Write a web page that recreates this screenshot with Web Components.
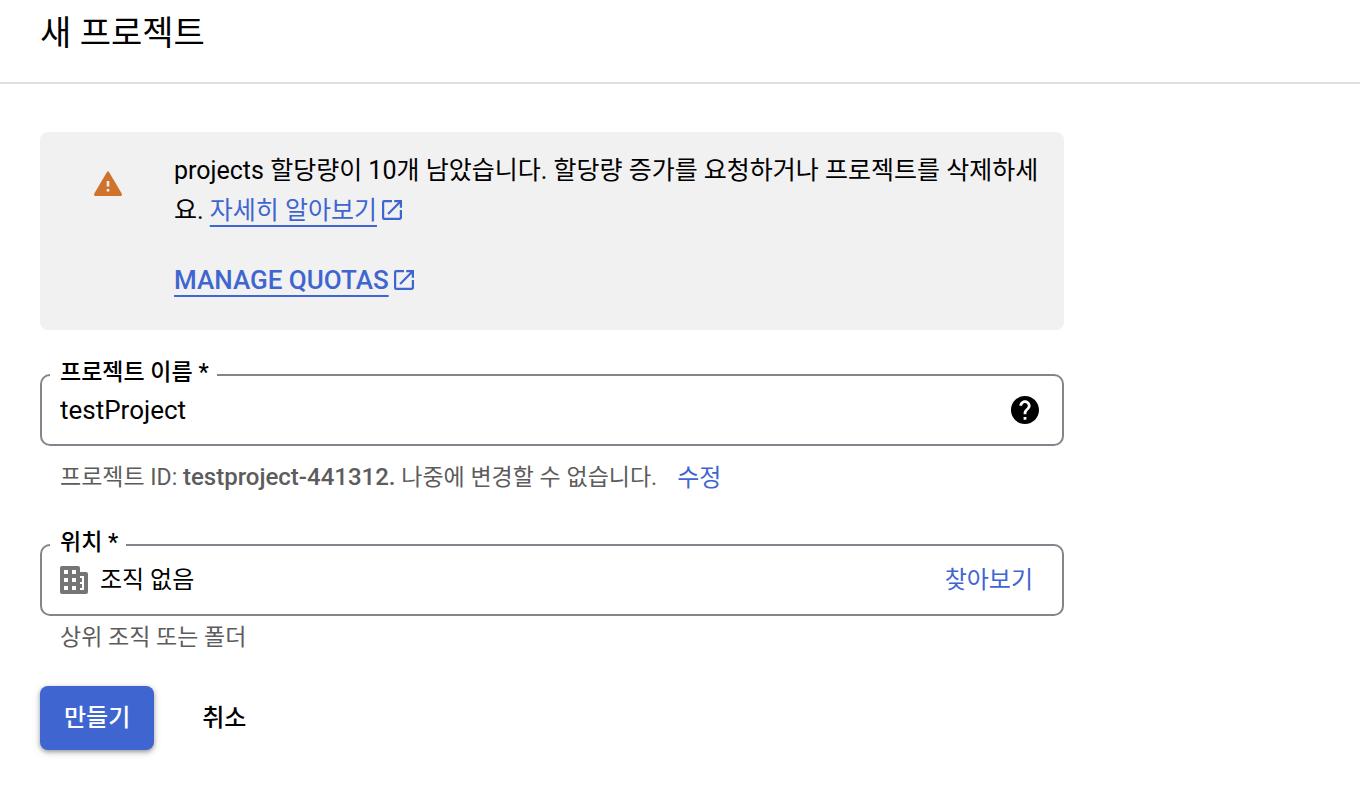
<!DOCTYPE html>
<html lang="ko">
<head>
<meta charset="utf-8">
<title>새 프로젝트</title>
<style>
  body {
    margin: 0;
    background: #fff;
    color: #000;
    font-family: Roboto, "Noto Sans CJK KR", sans-serif;
    --blue: #3f66d0;
    --outline: #80868b;
    --muted: #5c5c5c;
  }
</style>
</head>
<body>
<new-project-page></new-project-page>

<script>
const define = (name, html, setup) => customElements.define(name, class extends HTMLElement {
  constructor() {
    super();
    const template = document.createElement('template');
    template.innerHTML = html;
    this.attachShadow({ mode: 'open' }).append(template.content.cloneNode(true));
  }
  connectedCallback() { if (setup) setup(this, this.shadowRoot); }
});

const icons = {
  warning: ['0 0 28 25', 28, 25, '<path fill-rule="evenodd" d="M13 1Q14-.7 15 1L27.7 22.6Q28.6 25 26.4 25H1.6Q-.6 25 .3 22.6ZM12.7 10v5.6h2.6V10zm0 8v2.6h2.6V18z"/>'],
  external: ['3 3 18 18', 20, 20, '<path d="M19 19H5V5h7V3H5a2 2 0 0 0-2 2v14a2 2 0 0 0 2 2h14c1.100 0 2-.9 2-2v-7h-2zM14 3v2h3.590l-9.830 9.830 1.410 1.410L19 6.410V10h2V3z"/>'],
  help: ['2 2 20 20', 28, 28, '<path d="M12 2C6.480 2 2 6.480 2 12s4.480 10 10 10 10-4.480 10-10S17.520 2 12 2zm1 17h-2v-2h2zm2.070-7.750-.9.920C13.450 12.900 13 13.500 13 15h-2v-.5c0-1.100.450-2.100 1.170-2.830l1.240-1.260c.370-.360.590-.860.590-1.410 0-1.100-.9-2-2-2s-2 .9-2 2H8c0-2.210 1.790-4 4-4s4 1.790 4 4c0 .880-.360 1.680-.930 2.250z"/>'],
  building: ['0 0 28 28', 28, 28, '<path fill-rule="evenodd" d="M2 0H18Q20 0 20 2V6H26Q28 6 28 8V26Q28 28 26 28H2Q0 28 0 26V2Q0 0 2 0ZM4 4V8H8V4ZM12 4V8H16V4ZM4 12V16H8V12ZM12 12V16H16V12ZM4 20V24H8V20ZM12 20V24H16V20ZM20 10V12H22V16H20V18H22V22H20V24H24V10Z"/>']
};

define('line-icon', `
  <style>:host { display: inline-flex; flex: none; } svg { display: block; fill: currentColor; }</style>
  <svg aria-hidden="true"></svg>`, (host, root) => {
  const [box, width, height, shape] = icons[host.getAttribute('name')];
  const svg = root.querySelector('svg');
  svg.setAttribute('viewBox', box);
  svg.setAttribute('width', width);
  svg.setAttribute('height', height);
  svg.innerHTML = shape;
});

define('page-header', `
  <style>
    :host { display: block; padding: 8px 40px 24px; border-bottom: 2px solid #dfdfdf; }
    h1 { margin: 0; font-size: 34px; line-height: 50px; font-weight: 400; }
  </style>
  <header><h1><slot></slot></h1></header>`);

define('external-link', `
  <style>
    :host { display: inline; color: var(--blue); }
    a { color: inherit; text-decoration: underline 2px; text-underline-offset: 6px; text-decoration-skip-ink: none; }
    line-icon { margin-left: 5px; vertical-align: -1px; }
  </style>
  <a href="#"><slot></slot></a><line-icon name="external"></line-icon>`);

define('quota-notice', `
  <style>
    :host { display: flex; align-items: flex-start; gap: 52px; padding: 19px 24px 30px 54px; border-radius: 8px; background: #f1f1f1; }
    line-icon { color: #cf722b; margin-top: 20px; }
    .body { flex: 1; font-size: 25px; line-height: 40px; }
    .action { margin-top: 29px; font-size: 26px; font-weight: 500; }
  </style>
  <line-icon name="warning"></line-icon>
  <div class="body"><slot></slot><div class="action"><slot name="action"></slot></div></div>`);

define('outlined-field', `
  <style>
    :host { display: block; }
    .box { position: relative; display: flex; align-items: center; gap: 12px; height: 68px; padding: 0 23px 0 18px; border: 2px solid var(--outline); border-radius: 10px; }
    label { position: absolute; top: -19px; left: 8px; padding: 0 8px 0 10px; background: #fff; font-size: 23px; line-height: 32px; font-weight: 500; }
    input { flex: 1; min-width: 0; padding: 0; border: 0; outline: 0; background: none; color: inherit; font: inherit; font-size: 26px; line-height: 40px; }
    input[readonly] { font-size: 24px; }
    .hint { padding: 6px 20px 0; font-size: 23px; line-height: 32px; color: var(--muted); }
  </style>
  <div class="box">
    <label for="field"></label>
    <slot name="leading"></slot>
    <input id="field" type="text">
    <slot name="trailing"></slot>
  </div>
  <div class="hint"><slot name="hint"></slot></div>`, (host, root) => {
  const input = root.querySelector('input');
  root.querySelector('label').textContent = host.getAttribute('label');
  input.value = host.getAttribute('value');
  input.readOnly = host.hasAttribute('readonly');
});

define('action-button', `
  <style>
    :host { display: inline-flex; }
    button { margin: 0; padding: 0; border: 0; background: none; color: inherit; font: inherit; font-size: 24px; line-height: 32px; font-weight: 500; cursor: pointer; }
    :host([kind="link"]) button { color: var(--blue); font-weight: 400; }
    :host([kind="primary"]) button, :host([kind="plain"]) button { height: 64px; padding: 0 24px; border-radius: 8px; }
    :host([kind="primary"]) button { background: var(--blue); color: #fff; box-shadow: 0 2px 4px rgba(0,0,0,.3), 0 2px 8px rgba(0,0,0,.15); }
  </style>
  <button type="button"><slot></slot></button>`);

define('new-project-page', `
  <style>
    :host { display: block; }
    main { max-width: 1024px; padding: 48px 40px; }
    .name { margin-top: 44px; }
    .place { margin-top: 50px; }
    .hint-row { display: flex; align-items: center; gap: 20px; padding-top: 9px; }
    .hint-row strong { font-weight: 500; font-size: 24px; }
    .leading { color: #757575; }
    .browse { padding: 0 6px; }
    .actions { display: flex; gap: 24px; margin-top: 32px; }
    .help { display: flex; padding: 0; border: 0; background: none; color: #000; }
  </style>
  <page-header>새 프로젝트</page-header>
  <main>
    <quota-notice>projects 할당량이 10개 남았습니다. 할당량 증가를 요청하거나 프로젝트를 삭제하세요. <external-link>자세히 알아보기</external-link><external-link slot="action">MANAGE QUOTAS</external-link></quota-notice>
    <outlined-field class="name" label="프로젝트 이름 *" value="testProject">
      <button class="help" slot="trailing" type="button" aria-label="도움말"><line-icon name="help"></line-icon></button>
      <div class="hint-row" slot="hint"><span>프로젝트 ID: <strong>testproject-441312.</strong> 나중에 변경할 수 없습니다.</span><action-button kind="link">수정</action-button></div>
    </outlined-field>
    <outlined-field class="place" label="위치 *" value="조직 없음" readonly>
      <line-icon class="leading" slot="leading" name="building"></line-icon>
      <action-button class="browse" slot="trailing" kind="link">찾아보기</action-button>
      <span slot="hint">상위 조직 또는 폴더</span>
    </outlined-field>
    <div class="actions">
      <action-button kind="primary">만들기</action-button>
      <action-button kind="plain">취소</action-button>
    </div>
  </main>`);
</script>
</body>
</html>
